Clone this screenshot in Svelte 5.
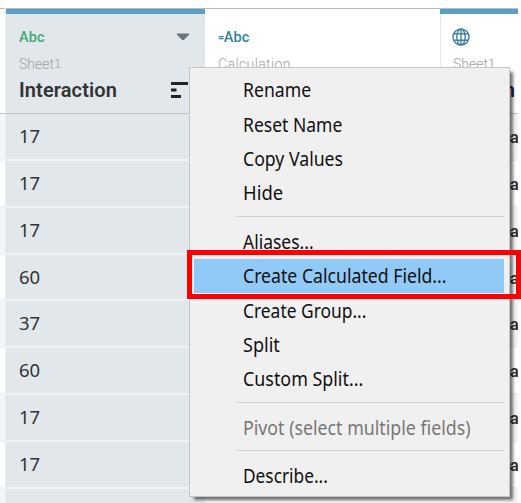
<script>
  const values = ['17', '17', '17', '60', '37', '60', '17', '17', ''];
  const groups = [
    [['Rename', 0.928], ['Reset Name', 0.922], ['Copy Values', 0.93], ['Hide', 0.97]],
    [['Aliases...', 0.92], ['Create Calculated Field...', 0.93], ['Create Group...', 0.915], ['Split', 0.95], ['Custom Split...', 0.94]],
    [['Pivot (select multiple fields)', 0.935]],
    [['Describe...', 0.91]],
  ];
</script>

<div class="screen">
  <div class="grid">
    <div class="column gutter">
      <header></header>
      {#each values as _, i}<div class="cell" class:odd={i % 2 === 0}></div>{/each}
    </div>
    <div class="column selected">
      <header>
        <div class="bar"></div>
        <div class="type green">Abc
          <svg class="caret" width="12" height="8" viewBox="0 0 12 8"><path d="M0 0.5H12V1.8L6.9 7H5.1L0 1.8Z" fill="#687782" /></svg>
        </div>
        <div class="source">Sheet<span class="one">1</span></div>
        <div class="title">Interaction
          <svg class="sort" width="17" height="16" viewBox="0 0 17 16"><path d="M0 0h17v3H0zM0 6.5h5.5v3H0zM0 13h10v3H0z" fill="#222" /></svg>
        </div>
      </header>
      {#each values as value}<div class="cell">{value}</div>{/each}
    </div>
    <div class="column calculation">
      <header>
        <div class="bar none"></div>
        <div class="type teal"><span class="eq">=</span>Abc</div>
        <div class="source wide">Calculation</div>
      </header>
      {#each values as _, i}<div class="cell" class:odd={i % 2 === 0}></div>{/each}
    </div>
    <div class="column place">
      <header>
        <div class="bar"></div>
        <div class="type">
          <svg class="globe" width="18" height="18" viewBox="0 0 18 18" fill="none" stroke="#43819d" stroke-width="1.4"><circle cx="9" cy="9" r="8" /><ellipse cx="9" cy="9" rx="4.2" ry="8" /><path d="M9 1V17M2 5.8H16M2 12.2H16" /></svg>
        </div>
        <div class="source">Sheet<span class="one">1</span></div>
        <div class="title">n</div>
      </header>
      {#each values as value, i}<div class="cell" class:odd={i % 2 === 0}>{value ? 'ea' : ''}</div>{/each}
    </div>
  </div>

  <div class="menu">
    {#each groups as group, g}
      {#if g}<div class="separator"></div>{/if}
      {#each group as [label, scale]}
        <div class="item" class:active={label.startsWith('Create Calc')} class:disabled={label.startsWith('Pivot')}>
          <span style="transform: scaleX({scale})">{label}</span>
        </div>
      {/each}
    {/each}
  </div>
  <div class="highlight"></div>
</div>

<style>
  .screen { position: relative; width: 521px; height: 503px; overflow: hidden; background: #fff; font-family: Roboto, sans-serif; }
  .grid { display: flex; width: 518px; height: 495px; padding-top: 8px; overflow: hidden; }
  .column { flex: none; box-sizing: border-box; }
  .gutter { width: 6px; border-right: 1px solid #e9edf0; }
  .selected { width: 199px; background: #e1e7eb; }
  .calculation { width: 235px; }
  .place { width: 78px; overflow: hidden; white-space: nowrap; box-shadow: inset 1px 0 #e9e9e9; }
  header { box-sizing: border-box; height: 106px; border-top: 1px solid #bbb; border-bottom: 1.5px solid #bfc3c5; overflow: hidden; }
  .bar { height: 5px; background: #5aa0c4; }
  .bar.none { background: transparent; }
  .type, .source, .title { display: flex; align-items: center; padding-left: 13px; }
  .type { height: 46px; font-size: 14.5px; font-weight: 500; letter-spacing: 0.1px; }
  .place .type { padding-left: 12px; }
  .green { color: #46a978; }
  .teal { color: #37809c; }
  .eq { font-size: 11px; margin-right: -0.5px; }
  .caret { margin: 0 16px 0 auto; }
  .source { height: 7px; font-size: 14px; font-weight: 300; color: #a0a0a0; }
  .wide { letter-spacing: 0.4px; }
  .one { font-family: "DejaVu Sans Condensed", "DejaVu Sans", sans-serif; font-size: 13px; font-weight: 200; color: #b4b4b4; }
  .title { height: 46px; font-size: 20px; font-weight: 600; letter-spacing: 0.1px; color: #333; }
  .sort { margin: 0 17px 0 auto; }
  .cell { box-sizing: border-box; height: 46.86px; padding-left: 13px; border-bottom: 2px solid #eff1f2; font-family: "Noto Sans", sans-serif; font-size: 18.5px; line-height: 44.5px; color: #333; }
  .cell.odd { background: #f5f5f5; }
  .gutter .cell { padding: 0; }
  .place .title { justify-content: flex-end; padding-right: 3px; color: #1c2550; }
  .place .cell { padding: 0; text-align: right; font-family: Roboto, sans-serif; font-size: 17px; line-height: 46px; font-weight: 600; letter-spacing: -1px; }
  .menu { position: absolute; left: 189px; top: 67px; box-sizing: border-box; width: 321px; height: 430px; padding: 5px 2px; border: 1.5px solid #c6c6c6; background: #f0f0f0; box-shadow: 4px 4px 3px -1px rgba(0, 0, 0, 0.55); }
  .item { display: flex; align-items: center; box-sizing: border-box; height: 34.4px; margin: 0 3px 0 2px; padding: 0 0 0 49px; font-family: "Noto Sans", sans-serif; font-size: 19px; line-height: 26px; color: #111; white-space: nowrap; }
  .item span { flex: none; transform-origin: left center; }
  .active { background: #91c9f7; }
  .disabled { color: #777; }
  .separator { height: 1px; margin: 5.5px 3px 7.5px 45px; background: #d0d0d0; }
  .highlight { position: absolute; left: 187px; top: 250px; width: 334px; height: 49px; box-sizing: border-box; border: 5px solid #f00; }
</style>
